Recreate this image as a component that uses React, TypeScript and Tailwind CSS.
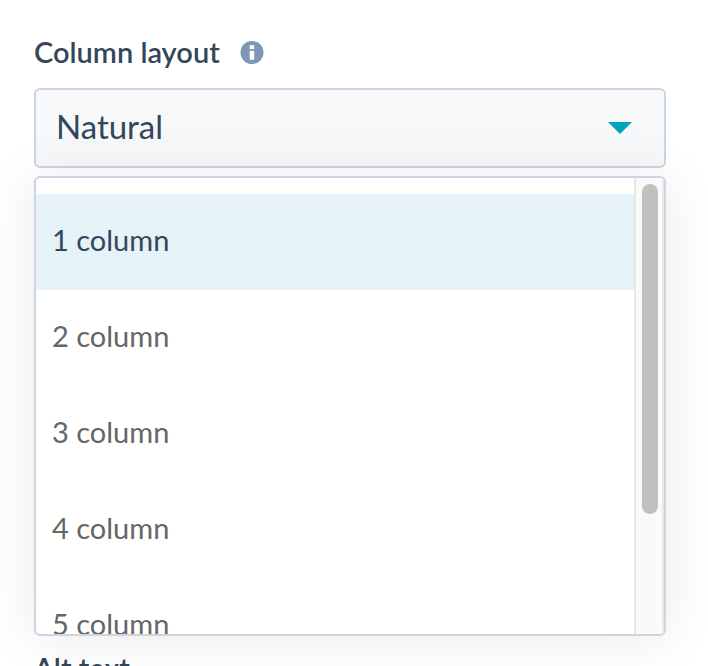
import { useState } from "react";

const options = ["1 column", "2 column", "3 column", "4 column", "5 column"];

function InfoIcon() {
  return (
    <svg viewBox="0 0 24 24" className="size-6" aria-hidden="true">
      <circle cx="12" cy="12.5" r="11.5" fill="#7c98b6" />
      <path d="M9.7 5.2h4.5V9H9.7zM9.7 10.8h4.5v9H9.7z" fill="#fff" />
    </svg>
  );
}

export default function App() {
  const [active, setActive] = useState(0);

  return (
    <main className="h-screen overflow-hidden bg-white pt-8 pr-[42px] pl-[34px] font-['Lato',sans-serif] text-[29px] leading-10 text-[#33475b]">
      <div className="flex items-center gap-5">
        <label htmlFor="layout" className="font-semibold">
          Column layout
        </label>
        <button type="button" aria-label="About column layout">
          <InfoIcon />
        </button>
      </div>

      <div className="relative mt-4">
        <select
          id="layout"
          className="block h-20 w-full appearance-none rounded-md border-2 border-[#cbd6e2] bg-[#f6f8fa] px-5 pb-1 text-[33px] text-[#33475b] outline-none"
        >
          <option>Natural</option>
        </select>
        <svg
          viewBox="0 0 24 12"
          className="pointer-events-none absolute top-[34px] right-[34px] h-3 w-6"
          aria-hidden="true"
        >
          <path d="M0 0h24L12 12z" fill="#00a4bd" />
        </svg>
      </div>

      <div className="relative mt-2 flex h-[460px] overflow-hidden rounded-md border-2 border-[#cbd6e2] bg-white shadow-[0_2px_56px_rgba(0,0,0,0.09)]">
        <ul className="flex-1 pt-4">
          {options.map((option, i) => (
            <li key={option}>
              <button
                type="button"
                aria-pressed={i === active}
                onClick={() => setActive(i)}
                className={
                  i === active
                    ? "block h-24 w-full bg-[#e5f3f8] px-4 pb-1 text-left text-[#33475b]"
                    : "block h-24 w-full px-4 pb-1 text-left text-[#666666]"
                }
              >
                {option}
              </button>
            </li>
          ))}
        </ul>
        <div className="w-[30px] border-x-2 border-[#e8e8e8] bg-[#fafafa] py-1.5 pl-1.5">
          <div className="h-[330px] w-4 rounded-full bg-[#c1c1c1]" />
        </div>
      </div>

      <p className="mt-3 font-semibold">Alt text</p>
    </main>
  );
}
